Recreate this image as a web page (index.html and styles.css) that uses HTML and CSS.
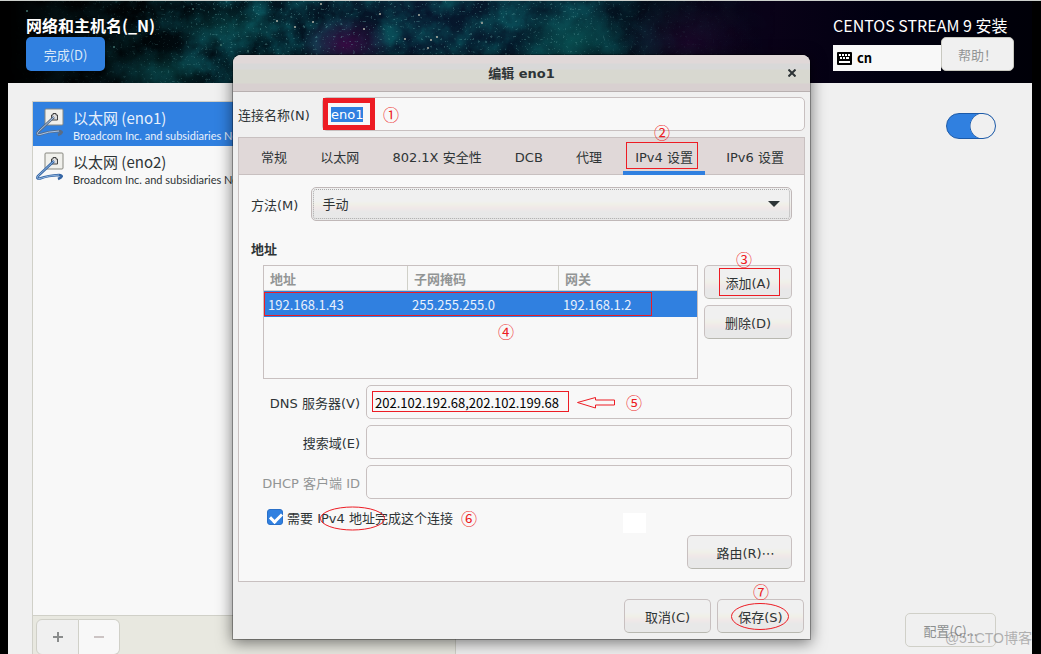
FILE: index.html
```html
<!DOCTYPE html>
<html lang="zh-CN">
<head>
    <meta charset="UTF-8">
    <meta name="viewport" content="width=device-width, initial-scale=1.0">
    <title>CENTOS STREAM 9 安装</title>
    <link rel="stylesheet" href="styles.css">
</head>
<body>
<div class="screen">

    <!-- Top banner -->
    <header class="banner">
        <svg class="space" viewBox="0 0 1024 82" preserveAspectRatio="xMidYMid slice" aria-hidden="true">
            <defs>
                <filter id="cloud" x="0" y="0" width="100%" height="100%" color-interpolation-filters="sRGB">
                    <feTurbulence type="fractalNoise" baseFrequency="0.035" numOctaves="6" seed="8" result="n"/>
                    <feColorMatrix in="n" type="matrix" values="0 0 0 0 0.04  0 0 0 0 0.32  0 0 0 0 0.36  2 0.8 0 0 -0.95"/>
                    <feComposite in2="SourceGraphic" operator="in"/>
                </filter>
                <filter id="dust" x="0" y="0" width="100%" height="100%" color-interpolation-filters="sRGB">
                    <feTurbulence type="fractalNoise" baseFrequency="0.4" numOctaves="2" seed="3"/>
                    <feColorMatrix type="matrix" values="0 0 0 0 0.4  0 0 0 0 0.65  0 0 0 0 0.65  0 10 0 0 -6.6"/>
                    <feComposite in2="SourceGraphic" operator="in"/>
                </filter>
                <linearGradient id="fade">
                    <stop offset="0" stop-color="#fff" stop-opacity="0"/>
                    <stop offset="0.12" stop-color="#fff" stop-opacity="0.4"/>
                    <stop offset="0.24" stop-color="#fff"/>
                    <stop offset="0.55" stop-color="#fff" stop-opacity="0.8"/>
                    <stop offset="0.64" stop-color="#fff" stop-opacity="0.2"/>
                    <stop offset="0.75" stop-color="#fff" stop-opacity="0"/>
                </linearGradient>
                <linearGradient id="sky">
                    <stop offset="0" stop-color="#000"/>
                    <stop offset="0.12" stop-color="#000406"/>
                    <stop offset="0.25" stop-color="#02141e"/>
                    <stop offset="0.4" stop-color="#07152c"/>
                    <stop offset="0.55" stop-color="#041c2a"/>
                    <stop offset="0.64" stop-color="#030814"/>
                    <stop offset="0.74" stop-color="#0a0218"/>
                    <stop offset="0.86" stop-color="#000010"/>
                    <stop offset="1" stop-color="#000008"/>
                </linearGradient>
                <radialGradient id="teal">
                    <stop offset="0" stop-color="#0a5a58" stop-opacity="0.7"/>
                    <stop offset="1" stop-color="#0a5a58" stop-opacity="0"/>
                </radialGradient>
                <radialGradient id="violet">
                    <stop offset="0" stop-color="#3c0442" stop-opacity="0.9"/>
                    <stop offset="1" stop-color="#300838" stop-opacity="0"/>
                </radialGradient>
            </defs>
            <rect width="1024" height="82" fill="url(#sky)"/>
            <rect width="1024" height="82" fill="url(#fade)" filter="url(#cloud)"/>
            <ellipse cx="222" cy="26" rx="60" ry="26" fill="url(#teal)" opacity="0.6"/>
            <ellipse cx="160" cy="70" rx="50" ry="24" fill="url(#teal)" opacity="0.6"/>
            <ellipse cx="566" cy="40" rx="62" ry="34" fill="url(#teal)"/>
            <ellipse cx="338" cy="44" rx="46" ry="30" fill="url(#violet)"/>
            <ellipse cx="680" cy="42" rx="70" ry="50" fill="url(#violet)" opacity="0.4"/>
            <rect width="1024" height="82" fill="url(#fade)" filter="url(#dust)" opacity="0.4"/>
            <g fill="#b0b0a4">
                <circle cx="397" cy="38" r="1"/><circle cx="411" cy="14" r="1"/><circle cx="423" cy="39" r="1"/>
                <circle cx="356" cy="28" r="1"/><circle cx="305" cy="21" r="1"/><circle cx="313" cy="3" r="1"/>
                <circle cx="420" cy="47" r="1"/><circle cx="429" cy="36" r="1"/><circle cx="474" cy="22" r="1"/>
                <circle cx="287" cy="26" r="1"/><circle cx="269" cy="20" r="1"/><circle cx="372" cy="13" r="1"/>
            </g>
            <g fill="#40706c">
                <circle cx="240" cy="50" r="1"/><circle cx="106" cy="46" r="1"/><circle cx="62" cy="69" r="1"/>
                <circle cx="213" cy="44" r="1"/><circle cx="19" cy="10" r="1"/><circle cx="185" cy="8" r="1"/>
            </g>
        </svg>
        <div class="banner-left">
            <h1 class="spoke-title">网络和主机名(_N)</h1>
            <button class="done" type="button">完成(D)</button>
        </div>
        <div class="banner-right">
            <div class="product">CENTOS STREAM 9 安装</div>
            <div class="banner-tools">
                <div class="layout-indicator">
                    <svg width="15" height="13" viewBox="0 0 15 13" aria-hidden="true">
                        <rect width="15" height="13" rx="1" fill="#000"/>
                        <path d="M2 3h2M5 3h2M8 3h2M11 3h2M3 6h2M6 6h2M9 6h3M2 10h11" stroke="#fff" stroke-width="2"/>
                    </svg>
                    <span>cn</span>
                </div>
                <button class="help" type="button">帮助！</button>
            </div>
        </div>
    </header>

    <!-- Network spoke -->
    <main class="content">
        <section class="devices">
            <ul class="device-list">
                <li class="device selected">
                    <svg class="device-icon" width="30" height="30" viewBox="0 0 30 30" aria-hidden="true">
                        <rect x="9" y="1" width="18" height="16" rx="1" fill="#f0f0ec" stroke="#888880"/>
                        <path d="M15.500 12V7h1.500V5.500h3V7h1.500v5z" fill="#ddd" stroke="#444"/>
                        <path d="M18 9L2 24q-2 3 2 2.500q8-3 19-3.500q6 1-1 4" fill="none" stroke="#5a6c84" stroke-width="2.500"/>
                        <path d="M18 9L2 24q-2 3 2 2.500q8-3 19-3.500" fill="none" stroke="#a8c4e8"/>
                    </svg>
                    <div class="device-text">
                        <div class="device-name">以太网 (eno1)</div>
                        <div class="device-vendor">Broadcom Inc. and subsidiaries Ne</div>
                    </div>
                </li>
                <li class="device">
                    <svg class="device-icon" width="30" height="30" viewBox="0 0 30 30" aria-hidden="true">
                        <rect x="9" y="1" width="18" height="16" rx="1" fill="#f0f0ec" stroke="#888880"/>
                        <path d="M15.500 12V7h1.500V5.500h3V7h1.500v5z" fill="#ddd" stroke="#444"/>
                        <path d="M18 9L2 24q-2 3 2 2.500q8-3 19-3.500q6 1-1 4" fill="none" stroke="#3465a4" stroke-width="2.500"/>
                        <path d="M18 9L2 24q-2 3 2 2.500q8-3 19-3.500" fill="none" stroke="#8fb3dd"/>
                    </svg>
                    <div class="device-text">
                        <div class="device-name">以太网 (eno2)</div>
                        <div class="device-vendor">Broadcom Inc. and subsidiaries Ne</div>
                    </div>
                </li>
            </ul>
            <div class="device-tools">
                <button class="tool" type="button" aria-label="添加">
                    <svg width="10" height="10" viewBox="0 0 10 10"><path d="M0 5h10M5 0v10" stroke="#8a8c8c" stroke-width="2"/></svg>
                </button>
                <button class="tool tool-off" type="button" aria-label="删除">
                    <svg width="10" height="10" viewBox="0 0 10 10"><path d="M0 5h10" stroke="#ccc4c4" stroke-width="2"/></svg>
                </button>
            </div>
        </section>
        <section class="details">
            <input class="switch" type="checkbox" role="switch" aria-label="以太网" checked>
            <button class="configure" type="button">配置(C)...</button>
        </section>
    </main>
    <div class="watermark">@51CTO博客</div>

    <!-- Connection editor -->
    <div class="dialog" role="dialog" aria-labelledby="dialogTitle">
        <div class="titlebar">
            <h2 id="dialogTitle">编辑 eno1</h2>
            <button class="close" type="button" aria-label="关闭">
                <svg width="8" height="8" viewBox="0 0 8 8"><path d="M0.500 0.500l7 7M7.500 0.500l-7 7" stroke="#2e3436" stroke-width="2"/></svg>
            </button>
        </div>

        <form class="editor" id="form">
            <div class="name-row">
                <label for="connName">连接名称(N)</label>
                <input class="entry" type="text" id="connName" value="eno1">
            </div>

            <div class="notebook">
                <div class="tabs" role="tablist">
                    <button class="tab" type="button" role="tab">常规</button>
                    <button class="tab" type="button" role="tab">以太网</button>
                    <button class="tab" type="button" role="tab">802.1X 安全性</button>
                    <button class="tab" type="button" role="tab">DCB</button>
                    <button class="tab" type="button" role="tab">代理</button>
                    <button class="tab active" type="button" role="tab" aria-selected="true">IPv4 设置</button>
                    <button class="tab" type="button" role="tab">IPv6 设置</button>
                </div>

                <div class="page">
                    <div class="method-row">
                        <label for="method">方法(M)</label>
                        <div class="combo">
                            <select id="method">
                                <option>手动</option>
                            </select>
                            <svg class="combo-arrow" width="12" height="6" viewBox="0 0 12 6" aria-hidden="true"><path d="M0 0h12L6 6z" fill="#2e3436"/></svg>
                        </div>
                    </div>

                    <h3 class="section-title">地址</h3>

                    <div class="addresses">
                        <div class="table-box">
                            <table class="address-table">
                                <colgroup><col class="col-address"><col class="col-mask"><col></colgroup>
                                <thead>
                                    <tr><th>地址</th><th>子网掩码</th><th>网关</th></tr>
                                </thead>
                                <tbody>
                                    <tr><td>192.168.1.43</td><td>255.255.255.0</td><td>192.168.1.2</td></tr>
                                </tbody>
                            </table>
                        </div>
                        <div class="address-buttons">
                            <button class="btn" type="button">添加(A)</button>
                            <button class="btn" type="button">删除(D)</button>
                        </div>
                    </div>

                    <div class="fields">
                        <label for="dns">DNS 服务器(V)</label>
                        <input class="entry dns" type="text" id="dns" value="202.102.192.68,202.102.199.68">
                        <label for="search">搜索域(E)</label>
                        <input class="entry" type="text" id="search">
                        <label class="dim" for="dhcp">DHCP 客户端 ID</label>
                        <input class="entry" type="text" id="dhcp" disabled>
                    </div>

                    <div class="require-row">
                        <input class="check" type="checkbox" id="require" checked>
                        <label for="require">需要 IPv4 地址完成这个连接</label>
                    </div>

                    <div class="route-row">
                        <button class="btn route" type="button">路由(R)⋯</button>
                    </div>
                </div>
            </div>

            <div class="actions">
                <button class="btn" type="button">取消(C)</button>
                <button class="btn" type="submit">保存(S)</button>
            </div>
        </form>

        <!-- Step marks drawn over the window -->
        <svg class="marks" viewBox="0 0 577 585" aria-hidden="true">
            <rect x="390" y="458" width="23" height="20" fill="#fff"/>
            <g fill="none" stroke="#ed1c24">
                <rect x="92.500" y="45.500" width="47" height="27" stroke-width="5"/>
                <rect x="393.500" y="87.500" width="71" height="26"/>
                <rect x="486.500" y="213.500" width="60" height="27"/>
                <rect x="31.500" y="237.500" width="387" height="23"/>
                <rect x="139.500" y="336.500" width="196" height="20"/>
                <path d="M344.500 347.500l18-5v2.500h19v5h-19v3z"/>
                <ellipse cx="119.500" cy="463.500" rx="32" ry="11.500"/>
                <ellipse cx="527" cy="561.500" rx="28.500" ry="13"/>
            </g>
            <g class="steps">
                <text x="158" y="66">①</text>
                <text x="429" y="84">②</text>
                <text x="511" y="211">③</text>
                <text x="273" y="283">④</text>
                <text x="401" y="354">⑤</text>
                <text x="236" y="470">⑥</text>
                <text x="528" y="543">⑦</text>
            </g>
        </svg>
    </div>
</div>

<script>
    var form = document.getElementById("form")

    form.addEventListener("submit",e=>{
        e.preventDefault();
    })

    // the name is ready to be typed over
    window.onload = function() {
        var name = document.getElementById("connName");
        name.focus();
        name.select();
    }
</script>
</body>
</html>
```
FILE: styles.css
```css
* {
    box-sizing: border-box;
}

body {
    margin: 0;
    background: #000;
    color: #2e3436;
    font-size: 13px;
    line-height: 18px;
}

h1, h2, h3, ul {
    margin: 0;
    padding: 0;
}

button, input, select {
    font: inherit;
    color: inherit;
    margin: 0;
}

.screen {
    position: relative;
    display: flex;
    flex-direction: column;
    height: 100vh;
    overflow: hidden;
    border-top: 1px solid #ccd0cc;
    padding: 0 9px 0 8px;
    font-family: "Noto Sans CJK SC", sans-serif;
}

/* banner */
.banner {
    position: relative;
    display: flex;
    justify-content: space-between;
    height: 82px;
    padding: 12px 18px;
    flex: none;
}

.space {
    position: absolute;
    top: 0;
    left: 0;
    width: 100%;
    height: 100%;
}

.banner-left, .banner-right {
    position: relative;
    display: flex;
    flex-direction: column;
    align-items: flex-start;
    color: #fff;
}

.spoke-title {
    font-size: 16px;
    font-weight: bold;
    line-height: 24px;
}

.done {
    width: 79px;
    height: 34px;
    padding: 2px 0 0;
    border: none;
    border-radius: 5px;
    background: #3080e0;
    color: #d8e8f8;
}

.product {
    font-size: 16px;
    line-height: 24px;
}

.banner-tools {
    display: flex;
    align-items: flex-end;
}

.layout-indicator {
    display: flex;
    align-items: center;
    gap: 5px;
    width: 108px;
    height: 26px;
    padding: 0 4px;
    background: #f8f8f8;
    color: #000;
    font-weight: bold;
}

.help {
    width: 73px;
    height: 34px;
    padding: 2px 0 0;
    border: 1px solid #c8c8c0;
    border-radius: 5px;
    background: #f0f0f0;
    color: #929595;
}

/* network page */
.content {
    display: flex;
    flex: 1;
    min-height: 0;
    gap: 24px;
    padding: 18px 36px 0 24px;
    background: #f0f0f0;
}

.devices {
    display: flex;
    flex-direction: column;
    flex: 0 0 424px;
    border: 1px solid #d0d0c8;
    border-bottom: none;
    background: #f8f8f8;
}

.device-list {
    flex: 1;
    list-style: none;
}

.device {
    display: flex;
    gap: 7px;
    height: 44px;
    padding: 6px 3px 0;
}

.device.selected {
    background: #3080e0;
    color: #e8f0fc;
}

.device-name {
    font-size: 15px;
    line-height: 20px;
}

.device-vendor {
    font-family: Lato, sans-serif;
    font-size: 11px;
    line-height: 16px;
    white-space: nowrap;
}

.device-tools {
    display: flex;
    height: 39px;
    padding: 3px 3px 0;
    border-top: 1px solid #d0d0c8;
    background: #e8e8e0;
}

.tool {
    width: 43px;
    height: 36px;
    padding: 0;
    border: 1px solid #d0d0c8;
    border-radius: 6px 0 0 6px;
    background: #f0f0f0;
}

.tool-off {
    width: 41px;
    border-left: none;
    border-radius: 0 6px 6px 0;
    background: #f8f8f8;
}

.details {
    display: flex;
    flex: 1;
    flex-direction: column;
    align-items: flex-end;
    justify-content: space-between;
    padding: 12px 0 7px;
}

.switch {
    appearance: none;
    width: 50px;
    height: 26px;
    border: 1px solid #1c5aa8;
    border-radius: 13px;
    background: radial-gradient(circle at 36px 12px, #f0f0f0 12px, #1c5aa8 13px, #3080e0 13px);
}

.configure {
    width: 91px;
    height: 34px;
    padding: 2px 0 0;
    border: 1px solid #d0d0c8;
    border-radius: 5px;
    background: #f0f0f0;
    color: #8c8f8f;
}

.watermark {
    position: absolute;
    right: 9px;
    bottom: 6px;
    color: rgba(110, 110, 110, 0.5);
    font-family: "Liberation Sans", "Noto Sans CJK SC", sans-serif;
    font-size: 14px;
    line-height: 20px;
}

/* connection editor */
.dialog {
    position: absolute;
    top: 54px;
    left: 233px;
    width: 577px;
    border-radius: 8px 8px 0 0;
    background: #f0f0f0;
    box-shadow: 0 0 0 1px rgba(0, 0, 0, 0.3), 0 3px 15px 1px rgba(0, 0, 0, 0.5);
    font-family: "DejaVu Sans", "Noto Sans CJK SC", sans-serif;
}

.dialog label {
    padding-top: 3px;
}

.titlebar {
    position: relative;
    display: flex;
    align-items: center;
    justify-content: center;
    height: 37px;
    padding-top: 2px;
    border-bottom: 1px solid #b8b0b0;
    border-radius: 8px 8px 0 0;
    background: linear-gradient(#e0d8d8 8px, #d8d8d8 9px, #d8d8d8 14px, #d8d8d0 15px, #d8d8d0 28px, #d8d0d0 29px);
}

.titlebar h2 {
    font-size: 13px;
    line-height: 18px;
}

.close {
    position: absolute;
    top: 8px;
    right: 8px;
    display: flex;
    align-items: center;
    justify-content: center;
    width: 20px;
    height: 20px;
    padding: 0;
    border: none;
    background: none;
}

.editor {
    padding: 5px 5px 6px;
}

.name-row {
    display: flex;
    align-items: center;
    justify-content: space-between;
    margin-bottom: 6px;
}

.name-row .entry {
    width: 483px;
}

.entry {
    width: 100%;
    height: 34px;
    padding: 0 8px;
    border: 1px solid #c8c0c0;
    border-radius: 5px;
    outline: none;
    background: #f8f8f8;
}

.entry::selection {
    background: #3080e0;
    color: #fff;
}

.dns {
    color: #000;
    font-family: "Noto Sans CJK SC", sans-serif;
}

.notebook {
    border: 1px solid #c8c0c0;
    background: #f8f8f8;
}

.tabs {
    display: flex;
    justify-content: space-between;
    height: 37px;
    padding: 0 8px 0 10px;
    border-bottom: 1px solid #c8c0c0;
    background: #e0d8d8;
}

.tab {
    height: 37px;
    padding: 6px 12px 0;
    border: none;
    border-bottom: 4px solid transparent;
    background: none;
    white-space: nowrap;
}

.tab.active {
    border-bottom-color: #3080e0;
}

.page {
    padding: 12px;
}

.method-row {
    display: flex;
    align-items: center;
    gap: 13px;
}

.combo {
    position: relative;
    flex: 1;
}

.combo select {
    display: block;
    appearance: none;
    width: 100%;
    height: 34px;
    padding: 2px 10px 0;
    border: 1px solid #c0b8b8;
    border-radius: 5px;
    outline: 1px dotted #a8a8a8;
    outline-offset: -3px;
    background: linear-gradient(#f0f0f0 13px, #f0f0e8 16px, #f0e8e8 20px, #e8e8e8 24px);
}

.combo-arrow {
    position: absolute;
    top: 14px;
    right: 12px;
}

.section-title {
    margin: 20px 0 6px;
    font-size: 13px;
    line-height: 18px;
}

.addresses {
    display: flex;
    gap: 6px;
    margin: 0 0 6px 12px;
}

.table-box {
    flex: 1;
    height: 114px;
    border: 1px solid #c8c0c0;
}

.address-table {
    width: 100%;
    table-layout: fixed;
    border-collapse: separate;
    border-spacing: 0;
    font-family: "Noto Sans CJK SC", sans-serif;
}

.col-address {
    width: 144px;
}

.col-mask {
    width: 151px;
}

.address-table th {
    height: 25px;
    padding: 2px 6px 0;
    border-right: 1px solid #d0d0c8;
    border-bottom: 1px solid #d0d0c8;
    color: #929595;
    text-align: left;
}

.address-table th:last-child {
    border-right: none;
}

.address-table td {
    height: 26px;
    padding: 2px 4px 0;
    background: #3080e0;
    color: #e8f0fc;
}

.address-buttons {
    display: flex;
    flex-direction: column;
    gap: 6px;
}

.btn {
    width: 88px;
    height: 34px;
    padding: 3px 0 0;
    border: 1px solid #c8c0c0;
    border-bottom-color: #b8b8b0;
    border-radius: 5px;
    background: linear-gradient(#f0f0f0 12px, #f0f0e8 16px, #f0e8e8 20px, #e8e8e8 24px);
}

.fields {
    display: grid;
    grid-template-columns: 109px 1fr;
    align-items: center;
    gap: 6px;
    margin-left: -12px;
    padding-left: 12px;
}

.fields label {
    text-align: right;
    white-space: nowrap;
}

.dim {
    color: #929595;
}

.require-row {
    display: flex;
    align-items: center;
    gap: 4px;
    height: 36px;
    padding-left: 16px;
}

.check {
    appearance: none;
    width: 16px;
    height: 16px;
    border: 1px solid #2a70c8;
    border-radius: 3px;
    background: #3080e0;
}

.check::before {
    content: "";
    display: block;
    width: 9px;
    height: 5px;
    margin: 3px 0 0 2px;
    border: solid #fff;
    border-width: 0 0 3px 3px;
    transform: rotate(-45deg);
}

.route-row {
    display: flex;
    justify-content: flex-end;
}

.route {
    width: 105px;
    padding-left: 12px;
}

.actions {
    display: flex;
    justify-content: flex-end;
    gap: 6px;
    padding: 17px 1px 0;
}

.actions .btn {
    width: 87px;
}

.marks {
    position: absolute;
    top: 0;
    left: 0;
    width: 577px;
    height: 585px;
    pointer-events: none;
}

.steps {
    fill: #ed1c24;
    font-family: "Noto Sans CJK SC", sans-serif;
    font-size: 16px;
    text-anchor: middle;
}
```
